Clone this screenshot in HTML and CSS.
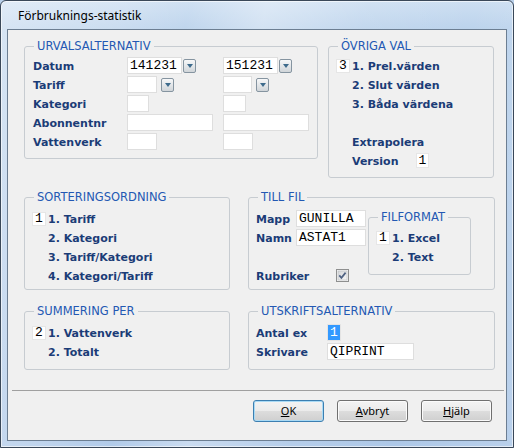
FILE: index.html
```html
<!DOCTYPE html>
<html lang="sv">
<head>
<meta charset="utf-8">
<title>Förbruknings-statistik</title>
<link rel="stylesheet" href="styles.css">
</head>
<body>
<div class="window">
  <div class="titlebar"><span class="title">Förbruknings-statistik</span></div>
  <div class="client">
    <div class="panel">
      <div class="row row-top">
        <section class="group g-urval">
          <span class="legend">URVALSALTERNATIV</span>
          <div class="urval-grid">
            <span class="lbl">Datum</span>
            <span class="cell"><span class="field mono w55">141231</span><span class="dd"></span></span>
            <span class="cell"><span class="field mono w55">151231</span><span class="dd"></span></span>
            <span class="lbl">Tariff</span>
            <span class="cell"><span class="field w30"></span><span class="dd dd-gap"></span></span>
            <span class="cell"><span class="field w29"></span><span class="dd dd-gap"></span></span>
            <span class="lbl">Kategori</span>
            <span class="cell"><span class="field w22"></span></span>
            <span class="cell"><span class="field w23"></span></span>
            <span class="lbl">Abonnentnr</span>
            <span class="cell"><span class="field w86"></span></span>
            <span class="cell"><span class="field w86"></span></span>
            <span class="lbl">Vattenverk</span>
            <span class="cell"><span class="field w30"></span></span>
            <span class="cell"><span class="field w30"></span></span>
          </div>
        </section>
        <section class="group g-ovriga">
          <span class="legend">ÖVRIGA VAL</span>
          <div class="line"><span class="box mono">3</span><span class="lbl">1. Prel.värden</span></div>
          <div class="line indent"><span class="lbl">2. Slut värden</span></div>
          <div class="line indent"><span class="lbl">3. Båda värdena</span></div>
          <div class="line"></div>
          <div class="line indent"><span class="lbl">Extrapolera</span></div>
          <div class="line indent"><span class="lbl w64">Version</span><span class="box box-tall mono">1</span></div>
        </section>
      </div>

      <div class="row row-mid">
        <section class="group g-left">
          <span class="legend">SORTERINGSORDNING</span>
          <div class="line"><span class="box mono">1</span><span class="lbl">1. Tariff</span></div>
          <div class="line indent"><span class="lbl">2. Kategori</span></div>
          <div class="line indent"><span class="lbl">3. Tariff/Kategori</span></div>
          <div class="line indent"><span class="lbl">4. Kategori/Tariff</span></div>
        </section>
        <section class="group g-right">
          <span class="legend">TILL FIL</span>
          <div class="till-body">
            <div class="till-left">
              <div class="line"><span class="lbl w40">Mapp</span><span class="field mono w70">GUNILLA</span></div>
              <div class="line"><span class="lbl w40">Namn</span><span class="field mono w70">ASTAT1</span></div>
              <div class="line"></div>
              <div class="line"><span class="lbl w80">Rubriker</span>
                <svg class="check" width="13" height="13" viewBox="0 0 13 13" aria-hidden="true">
                  <defs>
                    <linearGradient id="cbg" x1="0" y1="0" x2="1" y2="1">
                      <stop offset="0" stop-color="#d4d6d9"/>
                      <stop offset="1" stop-color="#f7f7f7"/>
                    </linearGradient>
                  </defs>
                  <rect x="0.5" y="0.5" width="12" height="12" fill="#f4f4f4" stroke="#8e8f8f"/>
                  <rect x="2" y="2" width="9" height="9" fill="url(#cbg)" stroke="#b9bcc0" stroke-width="0.6"/>
                  <path d="M3.3 6.4 L5.4 8.9 L9.6 3.6" fill="none" stroke="#4f6283" stroke-width="1.7"/>
                </svg>
              </div>
            </div>
            <section class="group g-filformat">
              <span class="legend">FILFORMAT</span>
              <div class="line"><span class="box mono">1</span><span class="lbl">1. Excel</span></div>
              <div class="line indent"><span class="lbl">2. Text</span></div>
            </section>
          </div>
        </section>
      </div>

      <div class="row row-bot">
        <section class="group g-left g-short">
          <span class="legend">SUMMERING PER</span>
          <div class="line"><span class="box mono">2</span><span class="lbl">1. Vattenverk</span></div>
          <div class="line indent"><span class="lbl">2. Totalt</span></div>
        </section>
        <section class="group g-right g-short">
          <span class="legend">UTSKRIFTSALTERNATIV</span>
          <div class="line"><span class="lbl w71">Antal ex</span><span class="field mono w14 sel"><span class="hl">1</span></span></div>
          <div class="line"><span class="lbl w71">Skrivare</span><span class="field mono w87">QIPRINT</span></div>
        </section>
      </div>
    </div>

    <div class="sep"></div>

    <div class="buttons">
      <button class="btn btn-default" type="button"><u>O</u>K</button>
      <button class="btn" type="button"><u>A</u>vbryt</button>
      <button class="btn" type="button"><u>H</u>jälp</button>
    </div>
  </div>
</div>
</body>
</html>
```

FILE: styles.css
```css
* { box-sizing: border-box; }

html, body {
  margin: 0;
  padding: 0;
}

body {
  width: 514px;
  height: 448px;
  overflow: hidden;
  background: #b9d0ea;
  font-family: "DejaVu Sans", Verdana, sans-serif;
}

/* ---------- window frame ---------- */
.window {
  width: 514px;
  height: 448px;
  border: 1px solid #3a4859;
  border-radius: 6px 6px 0 0;
  padding: 0 6px 6px;
  display: flex;
  flex-direction: column;
  background:
    linear-gradient(100deg,
      rgba(255,255,255,0.40) 0,
      rgba(255,255,255,0.22) 20%,
      rgba(255,255,255,0.05) 32%,
      rgba(255,255,255,0.35) 45%,
      rgba(255,255,255,0.10) 62%,
      rgba(255,255,255,0.00) 80%,
      rgba(255,255,255,0.15) 100%),
    linear-gradient(180deg, #cddff2 0, #bcd3ec 28px, #adc8e8 100%);
  box-shadow: inset 0 0 0 1px rgba(255,255,255,0.6);
}

.titlebar {
  height: 28px;
  flex: none;
  display: flex;
  align-items: center;
  padding-left: 11px;
}

.title {
  font-family: "Noto Sans", sans-serif;
  font-size: 12px;
  color: #000;
}

.client {
  flex: 1;
  background: #f0f0f0;
  border: 1px solid #6c7e92;
  display: flex;
  flex-direction: column;
}

/* ---------- panel / rows ---------- */
.panel {
  padding: 16px 0 0 16px;
}

.row {
  display: flex;
  align-items: flex-start;
}

.row-top { gap: 10px; }
.row-mid { gap: 18px; margin-top: 19px; }
.row-bot { gap: 18px; margin-top: 21px; }

/* ---------- group boxes ---------- */
.group {
  position: relative;
  border: 1px solid #c7ccd1;
  border-radius: 3px;
}

.legend {
  position: absolute;
  top: -7px;
  left: 9px;
  padding: 0 3px;
  background: #f0f0f0;
  font-size: 11.5px;
  line-height: 13px;
  color: #2358b3;
  white-space: nowrap;
}

.g-urval  { width: 294px; padding: 9px 0 7px 8px; }
.g-ovriga { width: 166px; padding: 9px 0 7px 7px; }
.g-left   { width: 206px; padding: 11px 0 4px 7px; }
.g-right  { width: 247px; padding: 11px 0 4px 7px; }
.g-short  { padding-bottom: 8px; }
.g-filformat { width: 103px; margin: 8px 0 0 2px; padding: 10px 0 8px 7px; }

/* ---------- content ---------- */
.lbl {
  font-weight: bold;
  font-size: 11px;
  color: #1b3c77;
  padding-top: 2px;
  white-space: nowrap;
}

.w40 { width: 40px; flex: none; }
.w64 { width: 64px; flex: none; }
.w71 { width: 71px; flex: none; }
.w80 { width: 80px; flex: none; }

.urval-grid {
  display: grid;
  grid-template-columns: 94px 96px auto;
  grid-auto-rows: 19px;
  align-items: center;
}

.cell {
  display: flex;
  align-items: center;
}

.line {
  display: flex;
  align-items: center;
  height: 19px;
}

.indent { padding-left: 16px; }

.till-body {
  display: flex;
  align-items: flex-start;
}

.till-left { width: 110px; flex: none; }

.mono {
  font-family: "Liberation Mono", "Courier New", monospace;
  font-size: 13px;
  color: #000;
}

.field {
  display: block;
  height: 17px;
  line-height: 15px;
  background: #fff;
  border: 1px solid #dedede;
  padding-left: 2px;
  white-space: nowrap;
  overflow: hidden;
}

.w14 { width: 14px; }
.w22 { width: 22px; }
.w23 { width: 23px; }
.w29 { width: 29px; }
.w30 { width: 30px; }
.w55 { width: 55px; }
.w70 { width: 70px; }
.w86 { width: 86px; }
.w87 { width: 87px; }

.sel { padding-left: 0; border-color: #e4e4e4; }
.hl {
  display: block;
  height: 100%;
  background: #3399ff;
  color: #fff;
  text-align: center;
}

.box {
  width: 14px;
  height: 14px;
  flex: none;
  margin-right: 2px;
  background: #fff;
  border: 1px solid #e6e6e6;
  line-height: 12px;
  text-align: center;
}

.box-tall { width: 13px; height: 15px; line-height: 13px; }

.dd {
  width: 13px;
  height: 14px;
  margin-left: 1px;
  flex: none;
  border: 1px solid #8594a0;
  border-radius: 2px;
  background: linear-gradient(#f7f8f9, #d0d5d9);
  display: flex;
  align-items: center;
  justify-content: center;
}

.dd::after {
  content: "";
  border-left: 3.5px solid transparent;
  border-right: 3.5px solid transparent;
  border-top: 4px solid #3e6b8c;
  margin-top: 1px;
}

.dd-gap { margin-left: 4px; }

.check { display: block; flex: none; }

/* ---------- bottom ---------- */
.sep {
  height: 1px;
  margin: 20px 2px 0 4px;
  background: #a0a0a0;
}

.buttons {
  display: flex;
  justify-content: flex-end;
  gap: 13px;
  margin-top: 9px;
  padding-right: 14px;
}

.btn {
  width: 71px;
  height: 22px;
  padding: 0 0 2px;
  border: 1px solid #707070;
  border-radius: 3px;
  background: linear-gradient(#f3f3f3 0, #ebebeb 50%, #dddddd 50%, #cfcfcf 100%);
  box-shadow: inset 0 0 0 1px #fbfbfb;
  font-family: "Noto Sans", sans-serif;
  font-size: 11px;
  color: #000;
}

.btn-default {
  border-color: #3c7fb1;
  box-shadow: inset 0 0 0 1px #a9daf5;
}

.btn u { text-underline-offset: 1px; }
```
